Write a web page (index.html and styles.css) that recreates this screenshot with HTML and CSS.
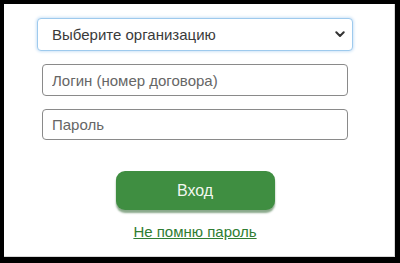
FILE: index.html
```html
<!DOCTYPE html>
<html lang="ru">
<head>
  <meta charset="UTF-8">
  <meta name="viewport" content="width=device-width, initial-scale=1">
  <title>Вход</title>
  <link rel="stylesheet" href="styles.css">
</head>
<body>
  <div class="frame">
    <form class="login-form">
      <div class="select-wrap">
        <select class="org-select">
          <option>Выберите организацию</option>
        </select>
        <svg class="chevron" width="10" height="7" viewBox="0 0 10 7">
          <path d="M1.3 1.3 L5 5 L8.7 1.3" fill="none" stroke="#333" stroke-width="2" stroke-linecap="round" stroke-linejoin="round"/>
        </svg>
      </div>
      <input type="text" class="field" placeholder="Логин (номер договора)">
      <input type="password" class="field" placeholder="Пароль">
      <button type="submit" class="btn-login">Вход</button>
      <a href="#" class="forgot">Не помню пароль</a>
    </form>
  </div>
</body>
</html>
```

FILE: styles.css
```css
* {
  margin: 0;
  padding: 0;
  box-sizing: border-box;
}

body {
  background: #000;
  font-family: 'Liberation Sans', Arial, sans-serif;
  padding: 4px 5px 6px 4px;
  height: 263px;
}

.frame {
  background: #fff;
  height: 253px;
  border-right: 1px solid #d8d8d8;
  border-bottom: 1px solid #d8d8d8;
}

.login-form {
  width: 306px;
  margin-left: 38px;
  padding-top: 14px;
  display: flex;
  flex-direction: column;
  align-items: stretch;
}

.select-wrap {
  position: relative;
  margin: 0 -5px 13px;
}

.org-select {
  appearance: none;
  width: 100%;
  height: 33px;
  border: 1px solid #9ecaed;
  border-radius: 4px;
  box-shadow: 0 0 3px 1px #cfe4f7;
  background: #fff;
  font-family: inherit;
  font-size: 15px;
  color: #3a3a3a;
  padding: 0 14px;
  outline: none;
}

.chevron {
  position: absolute;
  right: 8px;
  top: 13px;
}

.field {
  height: 32px;
  border: 1px solid #8a8a8a;
  border-radius: 4px;
  font-family: inherit;
  font-size: 15px;
  padding: 0 9px;
  margin-bottom: 13px;
  color: #333;
}

.field::placeholder {
  color: #666;
}

.field + .field {
  height: 31px;
}

.btn-login {
  align-self: center;
  width: 159px;
  height: 39px;
  margin-top: 18px;
  border: none;
  border-radius: 9px;
  background: #3f8e41;
  box-shadow: 0 3px 2px #8aa98b;
  color: #f2f7ef;
  font-family: inherit;
  font-size: 16px;
  cursor: pointer;
}

.forgot {
  align-self: center;
  margin-top: 13px;
  font-size: 15px;
  color: #2f7d32;
  text-decoration: underline;
}
```
